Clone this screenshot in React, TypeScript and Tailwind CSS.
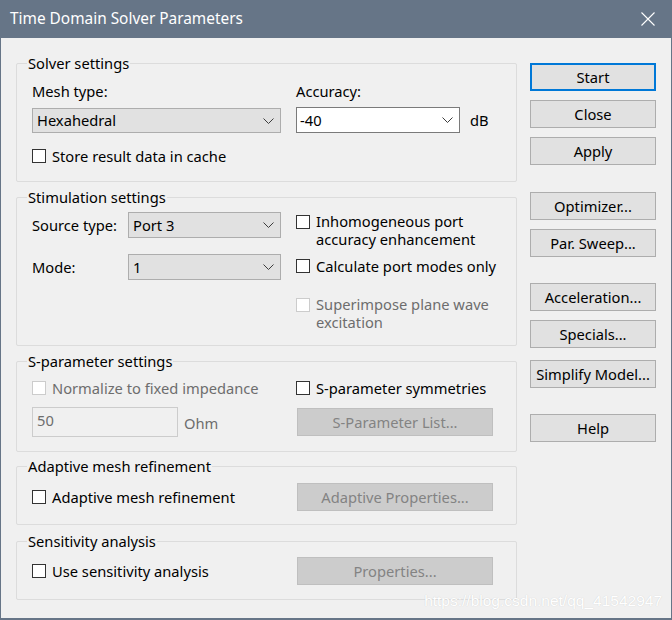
import React from "react";

const font = { fontFamily: '"Segoe UI", "Noto Sans", sans-serif' };

function Chevron() {
  return (
    <svg width="11" height="6" viewBox="0 0 11 6" className="shrink-0">
      <path d="M0.5 0.5 L5.5 5.5 L10.5 0.5" fill="none" stroke="#3c3c3c" strokeWidth="1" />
    </svg>
  );
}

function Select({ value, className = "" }: { value: string; className?: string }) {
  return (
    <div className={`flex items-center justify-between bg-[#e1e1e1] border border-[#adadad] pl-[4px] pr-[6px] ${className}`}>
      <span>{value}</span>
      <Chevron />
    </div>
  );
}

function Box({ disabled }: { disabled?: boolean }) {
  return (
    <span
      className={`inline-block w-[14px] h-[14px] shrink-0 bg-white border ${disabled ? "border-[#cccccc]" : "border-[#333333]"}`}
    />
  );
}

function Check({ label, disabled, className = "" }: { label: React.ReactNode; disabled?: boolean; className?: string }) {
  return (
    <div className={`flex items-center gap-[6px] h-[20px] ${disabled ? "text-[#6d6d6d]" : ""} ${className}`}>
      <Box disabled={disabled} />
      <span>{label}</span>
    </div>
  );
}

function Btn({ label, className = "", primary }: { label: string; className?: string; primary?: boolean }) {
  return (
    <div
      className={`h-[28px] flex items-center justify-center bg-[#e1e1e1] ${primary ? "border-2 border-[#0078d7]" : "border border-[#adadad]"} ${className}`}
    >
      {label}
    </div>
  );
}

function DisabledBtn({ label, className = "" }: { label: string; className?: string }) {
  return (
    <div className={`w-[196px] h-[28px] flex items-center justify-center bg-[#cccccc] border border-[#bfbfbf] text-[#838383] ${className}`}>
      {label}
    </div>
  );
}

function Group({ title, height, className = "", children }: { title: string; height: string; className?: string; children: React.ReactNode }) {
  return (
    <div className={`border border-[#dcdcdc] rounded-[2px] pl-[15px] ${height} ${className}`}>
      <div className="-mt-[11px] -ml-[5px] w-fit bg-[#f0f0f0] px-[1px] h-[20px] leading-[20px]">{title}</div>
      {children}
    </div>
  );
}

export default function App() {
  return (
    <div style={font} className="relative w-[672px] h-[620px] bg-[#667587] flex flex-col px-[1px] pb-[2px] text-[14.7px] text-black">
      <div className="h-[38px] flex items-center justify-between pl-[9px] pr-[16px] text-white text-[15.4px]">
        <span>Time Domain Solver Parameters</span>
        <svg width="14" height="14" viewBox="0 0 14 14">
          <path d="M0.5 0.5 L13.5 13.5 M13.5 0.5 L0.5 13.5" stroke="#ffffff" strokeWidth="1.1" />
        </svg>
      </div>

      <div className="flex-1 bg-[#f0f0f0] flex pl-[15px] pt-[25px]">
        <div className="w-[501px] flex flex-col">
          <Group title="Solver settings" height="h-[119px]">
            <div className="flex">
              <div className="w-[249px]">
                <div className="mt-[8px] h-[20px] leading-[20px]">Mesh type:</div>
                <Select value="Hexahedral" className="mt-[7px] h-[25px]" />
                <Check label="Store result data in cache" className="mt-[13px]" />
              </div>
              <div className="ml-[15px]">
                <div className="mt-[8px] h-[20px] leading-[20px]">Accuracy:</div>
                <div className="mt-[6px] flex items-center">
                  <div className="w-[164px] h-[26px] bg-white border border-[#7a7a7a] flex items-center justify-between pl-[3px] pr-[6px]">
                    <span>-40</span>
                    <Chevron />
                  </div>
                  <span className="ml-[10px]">dB</span>
                </div>
              </div>
            </div>
          </Group>

          <Group title="Stimulation settings" height="h-[149px]" className="mt-[15px]">
            <div className="flex">
              <div className="w-[249px]">
                <div className="mt-[5px] flex items-center h-[26px]">
                  <span className="w-[96px]">Source type:</span>
                  <Select value="Port 3" className="flex-1 h-[26px]" />
                </div>
                <div className="mt-[16px] flex items-center h-[26px]">
                  <span className="w-[96px]">Mode:</span>
                  <Select value="1" className="flex-1 h-[26px]" />
                </div>
              </div>
              <div className="ml-[15px] leading-[18px]">
                <div className="mt-[5px] flex gap-[6px]">
                  <span className="mt-[2px]"><Box /></span>
                  <span>Inhomogeneous port<br />accuracy enhancement</span>
                </div>
                <div className="mt-[9px] flex items-center gap-[6px]">
                  <Box />
                  <span>Calculate port modes only</span>
                </div>
                <div className="mt-[20px] flex gap-[6px] text-[#6d6d6d]">
                  <span className="mt-[2px]"><Box disabled /></span>
                  <span>Superimpose plane wave<br />excitation</span>
                </div>
              </div>
            </div>
          </Group>

          <Group title="S-parameter settings" height="h-[91px]" className="mt-[15px]">
            <div className="flex">
              <div className="w-[249px]">
                <Check label="Normalize to fixed impedance" disabled className="mt-[7px]" />
                <div className="mt-[9px] flex items-center">
                  <div className="w-[146px] h-[30px] border border-[#cccccc] bg-[#f0f0f0] text-[#6d6d6d] pl-[4px] leading-[24px]">50</div>
                  <span className="ml-[6px] mt-[2px] text-[#6d6d6d]">Ohm</span>
                </div>
              </div>
              <div className="ml-[15px]">
                <Check label="S-parameter symmetries" className="mt-[7px]" />
                <DisabledBtn label="S-Parameter List..." className="mt-[10px] ml-[1px]" />
              </div>
            </div>
          </Group>

          <Group title="Adaptive mesh refinement" height="h-[59px]" className="mt-[14px]">
            <div className="flex items-center mt-[7px]">
              <div className="w-[249px]">
                <Check label="Adaptive mesh refinement" />
              </div>
              <DisabledBtn label="Adaptive Properties..." className="ml-[16px]" />
            </div>
          </Group>

          <Group title="Sensitivity analysis" height="h-[59px]" className="mt-[16px]">
            <div className="flex items-center mt-[6px]">
              <div className="w-[249px]">
                <Check label="Use sensitivity analysis" />
              </div>
              <DisabledBtn label="Properties..." className="ml-[16px]" />
            </div>
          </Group>
        </div>

        <div className="ml-[13px] w-[126px] flex flex-col">
          <Btn label="Start" primary />
          <Btn label="Close" className="mt-[9px]" />
          <Btn label="Apply" className="mt-[9px]" />
          <Btn label="Optimizer..." className="mt-[27px]" />
          <Btn label="Par. Sweep..." className="mt-[9px]" />
          <Btn label="Acceleration..." className="mt-[26px]" />
          <Btn label="Specials..." className="mt-[9px]" />
          <Btn label="Simplify Model..." className="mt-[12px]" />
          <Btn label="Help" className="mt-[26px]" />
        </div>
      </div>

      <div
        className="absolute right-[10px] bottom-[8px] text-[15.5px] text-white"
        style={{ fontFamily: '"Liberation Sans", Arial, sans-serif', textShadow: "0 0 1px #c8c8c8" }}
      >
        https://blog.csdn.net/qq_41542947
      </div>
    </div>
  );
}
